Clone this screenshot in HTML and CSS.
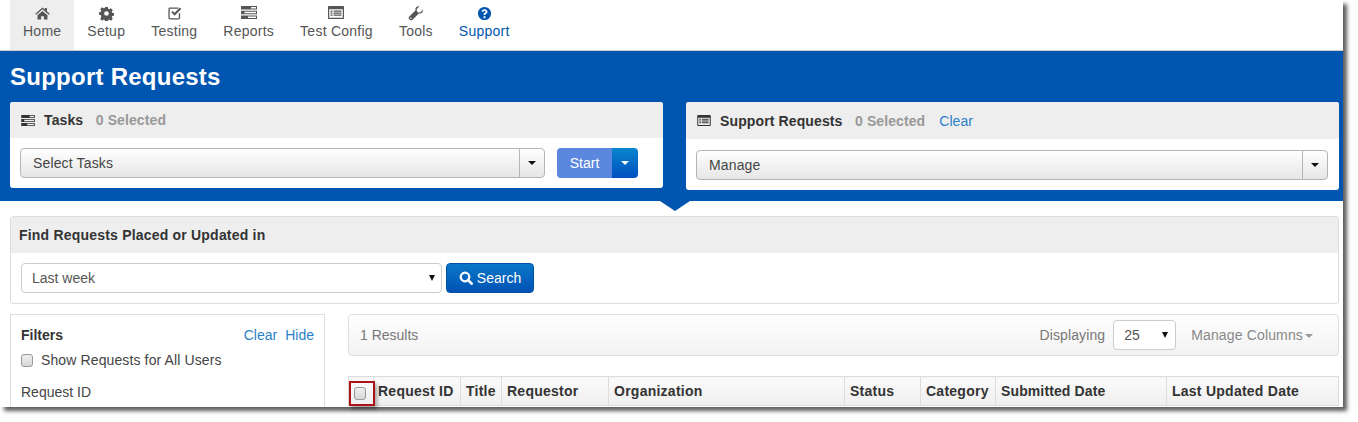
FILE: index.html
```html
<!DOCTYPE html>
<html lang="en">
<head>
<meta charset="utf-8">
<title>Support Requests</title>
<link rel="stylesheet" href="styles.css">
</head>
<body>
<div class="frame">
  <div class="clip">
    <nav class="nav">
      <a class="nav-item active">
        <svg class="nav-icon" viewBox="0 0 16 16"><path d="M8 1.500 0.300 8.200l1 1.100L8 3.500l6.700 5.800 1-1.100L12.700 5.600V2h-2.200v1.700z"/><path d="M2.700 9.800 8 5.200l5.300 4.600V14.500H9.500v-3.500H6.500v3.500H2.700z"/></svg>
        <span>Home</span>
      </a>
      <a class="nav-item">
        <svg class="nav-icon" viewBox="0 0 16 16"><path fill-rule="evenodd" d="M6.600 1h2.800l.4 2 1.200.5 1.700-1.100 2 2-1.100 1.700.5 1.200 2 .4v2.600l-2 .4-.5 1.200 1.100 1.700-2 2-1.700-1.100-1.200.5-.4 2H6.600l-.4-2-1.200-.5-1.700 1.100-2-2 1.100-1.700L1.900 9.700l-2-.4V6.700l2-.4L2.400 5.100 1.300 3.400l2-2L5 2.500l1.200-.5zM8 5.500a2.500 2.500 0 1 0 0 5 2.500 2.500 0 0 0 0-5z"/></svg>
        <span>Setup</span>
      </a>
      <a class="nav-item">
        <svg class="nav-icon" viewBox="0 0 16 16"><path d="M2.500 1.500h9.500v1.400H2.900v10.200h9.700V8.500L14 7v5.600c0 1-.7 1.800-1.700 1.800H3.200c-1 0-1.700-.8-1.700-1.800V3.200c0-1 .7-1.700 1.700-1.700z"/><path d="M4.600 6.600 6 5.200l2.100 2.100L13.700 1.700l1.500 1.500-7.100 7.100z"/></svg>
        <span>Testing</span>
      </a>
      <a class="nav-item">
        <svg class="nav-icon wide" viewBox="0 0 16 13"><path fill-rule="evenodd" d="M0 0h16v3.600H0zm10 1v1.600h5V1zM0 4.700h16v3.600H0zM3.500 5.700v1.600H15V5.700zM0 9.400h16V13H0zm7 1v1.600h8v-1.600z"/></svg>
        <span>Reports</span>
      </a>
      <a class="nav-item">
        <svg class="nav-icon wide" viewBox="0 0 16 13"><path fill-rule="evenodd" d="M1 0h14c.6 0 1 .4 1 1v11c0 .6-.4 1-1 1H1c-.6 0-1-.4-1-1V1c0-.6.4-1 1-1zm.2 3.200v8.600h13.600V3.200zM2.500 4.500h2v1.200h-2zm3 0h8v1.200h-8zm-3 2h2v1.200h-2zm3 0h8v1.200h-8zm-3 2h2v1.200h-2zm3 0h8v1.200h-8z"/></svg>
        <span>Test Config</span>
      </a>
      <a class="nav-item">
        <svg class="nav-icon" viewBox="0 0 16 16"><path fill-rule="evenodd" d="M15.700 3.700c.3.900.2 2-.4 2.900-.9 1.300-2.400 1.800-3.800 1.300L4.600 14.800c-.7.700-1.800.7-2.500 0l-.9-.9c-.7-.7-.7-1.800 0-2.500l6.900-6.900c-.5-1.400 0-2.900 1.300-3.800.9-.6 2-.7 2.900-.4L9.400 3.200v2.400l1.400 1.400h2.400zM3 12.200a.8.800 0 1 0 0 1.600.8.800 0 0 0 0-1.600z"/></svg>
        <span>Tools</span>
      </a>
      <a class="nav-item support">
        <svg class="nav-icon" viewBox="0 0 16 16"><path fill-rule="evenodd" d="M8 1a7 7 0 1 1 0 14A7 7 0 0 1 8 1zM7 11v2h2v-2zM8 3.500c-1.800 0-3 1-3.100 2.700h1.900c.1-.7.500-1.100 1.200-1.100s1.100.4 1.100 1c0 .5-.3.800-.9 1.200-.9.600-1.200 1.100-1.200 2.200v.1h1.900v-.1c0-.6.200-.8.800-1.200.9-.6 1.400-1.200 1.400-2.300 0-1.500-1.200-2.500-3.100-2.500z"/></svg>
        <span>Support</span>
      </a>
    </nav>

    <section class="hero">
      <h1 class="hero-title">Support Requests</h1>
      <div class="hero-panels">
        <div class="action-panel">
          <div class="action-head">
            <svg class="head-icon" viewBox="0 0 16 13"><path fill-rule="evenodd" d="M0 0h16v3.600H0zm10 1v1.600h5V1zM0 4.700h16v3.600H0zM3.500 5.700v1.600H15V5.700zM0 9.400h16V13H0zm7 1v1.600h8v-1.600z"/></svg>
            <strong class="head-title">Tasks</strong>
            <strong class="head-count">0 Selected</strong>
          </div>
          <div class="action-body">
            <div class="combo grow"><span class="combo-text">Select Tasks</span><span class="combo-arrow"><i class="caret"></i></span></div>
            <div class="split">
              <span class="split-main">Start</span>
              <span class="split-arrow"><i class="caret white"></i></span>
            </div>
          </div>
        </div>
        <div class="action-panel tall">
          <div class="action-head">
            <svg class="head-icon" viewBox="0 0 16 13"><path fill-rule="evenodd" d="M1 0h14c.6 0 1 .4 1 1v11c0 .6-.4 1-1 1H1c-.6 0-1-.4-1-1V1c0-.6.4-1 1-1zm.2 3.200v8.600h13.600V3.200zM2.500 4.500h2v1.200h-2zm3 0h8v1.200h-8zm-3 2h2v1.200h-2zm3 0h8v1.200h-8zm-3 2h2v1.200h-2zm3 0h8v1.200h-8z"/></svg>
            <strong class="head-title">Support Requests</strong>
            <strong class="head-count">0 Selected</strong>
            <a class="link head-link">Clear</a>
          </div>
          <div class="action-body">
            <div class="combo grow"><span class="combo-text">Manage</span><span class="combo-arrow"><i class="caret"></i></span></div>
          </div>
        </div>
      </div>
      <i class="hero-pointer"></i>
    </section>

    <main class="content">
      <section class="find">
        <div class="find-head">Find Requests Placed or Updated in</div>
        <div class="find-body">
          <div class="plain-select find-select"><span>Last week</span><i class="caret narrow"></i></div>
          <button class="search-btn" type="button">
            <svg class="search-icon" viewBox="0 0 14 14"><circle cx="6" cy="6" r="4.300" fill="none" stroke="#fff" stroke-width="2.200"/><path d="M9 9l3.700 3.700" stroke="#fff" stroke-width="2.600" stroke-linecap="round"/></svg>
            Search
          </button>
        </div>
      </section>

      <div class="columns">
        <aside class="filters">
          <div class="filters-top">
            <strong>Filters</strong>
            <span class="filters-links"><a class="link">Clear</a><a class="link">Hide</a></span>
          </div>
          <label class="check-row"><input class="check" type="checkbox"> Show Requests for All Users</label>
          <div class="filter-label">Request ID</div>
        </aside>
        <div class="results">
          <div class="results-bar">
            <span class="results-count">1 Results</span>
            <span class="results-right">
              <span class="displaying">Displaying</span>
              <span class="plain-select page-select"><span>25</span><i class="caret narrow"></i></span>
              <span class="manage">Manage Columns<i class="caret grey"></i></span>
            </span>
          </div>
          <table class="grid">
            <colgroup>
              <col class="c-check"><col class="c-id"><col class="c-title"><col class="c-req"><col class="c-org"><col class="c-status"><col class="c-cat"><col class="c-sub"><col class="c-upd">
            </colgroup>
            <thead>
              <tr>
                <th class="th-check"><input class="check" type="checkbox" aria-label="Select all"></th>
                <th class="th-id">Request ID</th><th>Title</th><th>Requestor</th><th>Organization</th><th>Status</th><th>Category</th><th class="th-sub">Submitted Date</th><th>Last Updated Date</th>
              </tr>
            </thead>
          </table>
        </div>
      </div>
    </main>
  </div>
  <div class="highlight"></div>
</div>
</body>
</html>
```

FILE: styles.css
```css
* { box-sizing: border-box; }

html, body {
  margin: 0;
  padding: 0;
  height: 422px;
  overflow: hidden;
  background: #fff;
}

body {
  font-family: "Liberation Sans", Arial, sans-serif;
  font-size: 14px;
  line-height: 20px;
  color: #333;
}

.frame {
  position: relative;
  width: 1343px;
  height: 407px;
  background: #fff;
  box-shadow: 4px 4px 4px rgba(40, 40, 40, .75);
}

.clip {
  height: 407px;
  overflow: hidden;
}

/* top navigation */
.nav {
  display: flex;
  height: 51px;
  padding-left: 10px;
  border-bottom: 1px solid #ccc;
}

.nav-item {
  display: flex;
  flex-direction: column;
  align-items: center;
  height: 50px;
  padding: 6px 13px 0;
  color: #555;
  letter-spacing: .25px;
}

.nav-item.active { background: #eee; }
.nav-item.support { color: #0055b0; }

.nav-icon {
  display: block;
  width: 15px;
  height: 15px;
  fill: currentColor;
}

.nav-icon.wide { width: 16px; height: 13px; margin: 0 0 2px; }

.nav-item span { display: block; }

/* blue header */
.hero {
  position: relative;
  height: 150px;
  padding: 0 4px 0 10px;
  background: #0055b0;
}

.hero-title {
  margin: 0;
  height: 51px;
  font-size: 24px;
  line-height: 52px;
  font-weight: 700;
  letter-spacing: .25px;
  color: #fff;
}

.hero-panels {
  display: grid;
  grid-template-columns: 653px 653px;
  column-gap: 23px;
  align-items: start;
}

.action-panel {
  height: 86px;
  background: #fff;
  border-radius: 3px;
  overflow: hidden;
}

.action-panel.tall { height: 88px; }

.action-head {
  display: flex;
  align-items: center;
  height: 36px;
  padding-left: 11px;
  background: #eee;
}

.tall .action-head { height: 37px; }

.head-icon {
  width: 14px;
  height: 11px;
  margin-right: 9px;
  fill: #333;
}

.head-title { color: #333; letter-spacing: .12px; }

.head-count {
  margin-left: 12.5px;
  color: #999;
  letter-spacing: .1px;
}

.head-link { margin-left: 14px; letter-spacing: .05px; }

.link { color: #2a7fc9; }

.action-body {
  display: flex;
  padding: 10px 25px 0 10px;
}

.tall .action-body { padding: 11px 11px 0 10px; }

.grow { flex: 1; }

.combo {
  display: flex;
  height: 30px;
  border: 1px solid #b5b5b5;
  border-radius: 4px;
  background: linear-gradient(#fff, #e6e6e6);
  color: #444;
  letter-spacing: .15px;
}

.combo-text {
  flex: 1;
  padding: 4px 12px;
}

.combo-arrow {
  display: flex;
  align-items: center;
  justify-content: center;
  width: 25px;
  border-left: 1px solid #b5b5b5;
}

.caret {
  display: inline-block;
  width: 0;
  height: 0;
  border-top: 4px solid #111;
  border-left: 4px solid transparent;
  border-right: 4px solid transparent;
}

.caret.narrow {
  border-top-width: 6px;
  border-left-width: 3px;
  border-right-width: 3px;
}

.caret.white { border-top-color: #fff; }
.caret.grey { border-top-color: #999; margin-left: 2px; vertical-align: 2px; }

.split {
  display: flex;
  width: 81px;
  height: 30px;
  margin-left: 12px;
  border-radius: 4px;
  overflow: hidden;
  color: #fff;
}

.split-main {
  flex: 1;
  padding-top: 5px;
  text-align: center;
  background: #5b87de;
}

.split-arrow {
  display: flex;
  align-items: center;
  justify-content: center;
  width: 26px;
  background: linear-gradient(#0a86cc, #0050c0);
}

.hero-pointer {
  position: absolute;
  left: 660px;
  top: 150px;
  width: 0;
  height: 0;
  border-top: 10px solid #0055b0;
  border-left: 15px solid transparent;
  border-right: 15px solid transparent;
}

/* page content */
.content { padding: 15px 4px 0 10px; }

.find {
  height: 88px;
  border: 1px solid #ddd;
  border-radius: 3px;
}

.find-head {
  height: 36px;
  padding: 8px;
  background: #eee;
  font-weight: 700;
  letter-spacing: .2px;
}

.find-body {
  display: flex;
  gap: 4px;
  padding: 10px 10px 0;
}

.plain-select {
  display: flex;
  align-items: center;
  justify-content: space-between;
  height: 30px;
  border: 1px solid #ccc;
  border-radius: 4px;
  background: #fff;
  color: #555;
}

.find-select {
  width: 421px;
  padding: 0 6px 0 10px;
}

.page-select {
  width: 63px;
  padding: 0 7px 0 10px;
  margin: 0 15px 0 8px;
}

.search-btn {
  display: flex;
  align-items: center;
  justify-content: center;
  gap: 4px;
  width: 88px;
  height: 30px;
  padding: 0;
  border: 1px solid #0050a8;
  border-radius: 4px;
  background: linear-gradient(#0a78c8, #0052b4);
  color: #fff;
  font: inherit;
}

.search-icon { width: 14px; height: 14px; }

.columns {
  display: grid;
  grid-template-columns: 315px 991px;
  column-gap: 23px;
  margin-top: 10px;
}

.filters {
  height: 110px;
  padding: 10px 10px 0;
  border: 1px solid #ddd;
}

.filters-top {
  display: flex;
  justify-content: space-between;
}

.filters-links { display: flex; gap: 8px; }

.check-row {
  display: flex;
  align-items: center;
  gap: 8px;
  margin-top: 5px;
  color: #444;
  letter-spacing: .12px;
}

.check {
  appearance: none;
  display: block;
  width: 12px;
  height: 13px;
  margin: 0;
  border: 1px solid #999;
  border-radius: 3px;
  background: linear-gradient(#eee, #d8d8d8);
}

.filter-label {
  margin-top: 12px;
  color: #444;
}

.results-bar {
  display: flex;
  align-items: center;
  justify-content: space-between;
  height: 42px;
  padding: 0 25px 0 11px;
  border: 1px solid #ddd;
  border-radius: 4px;
  background: linear-gradient(#fff, #f2f2f2);
  color: #777;
}

.results-right {
  display: flex;
  align-items: center;
}

.displaying { letter-spacing: .1px; }

.manage { color: #888; letter-spacing: .15px; }

.grid {
  width: 990px;
  margin-top: 20px;
  table-layout: fixed;
  border-collapse: collapse;
  border-top: 1px solid #ddd;
}

.c-check { width: 25px; }
.c-id { width: 87px; }
.c-title { width: 41px; }
.c-req { width: 107px; }
.c-org { width: 236px; }
.c-status { width: 76px; }
.c-cat { width: 75px; }
.c-sub { width: 171px; }
.c-upd { width: 172px; }

.grid th {
  height: 29px;
  padding: 0 5px;
  border: 1px solid #ddd;
  border-top: 0;
  background: linear-gradient(#fafafa, #efefef);
  font-weight: 700;
  text-align: left;
  white-space: nowrap;
  letter-spacing: .25px;
  color: #333;
}

.grid .th-id { padding-left: 4px; }

.grid .th-sub { letter-spacing: .12px; }

.grid .th-check { padding: 5px 0 0 5px; }

.highlight {
  position: absolute;
  left: 349px;
  top: 381px;
  width: 26px;
  height: 25px;
  border: 2px solid #b01116;
  box-shadow: 2px 3px 4px rgba(0, 0, 0, .35);
}
```
